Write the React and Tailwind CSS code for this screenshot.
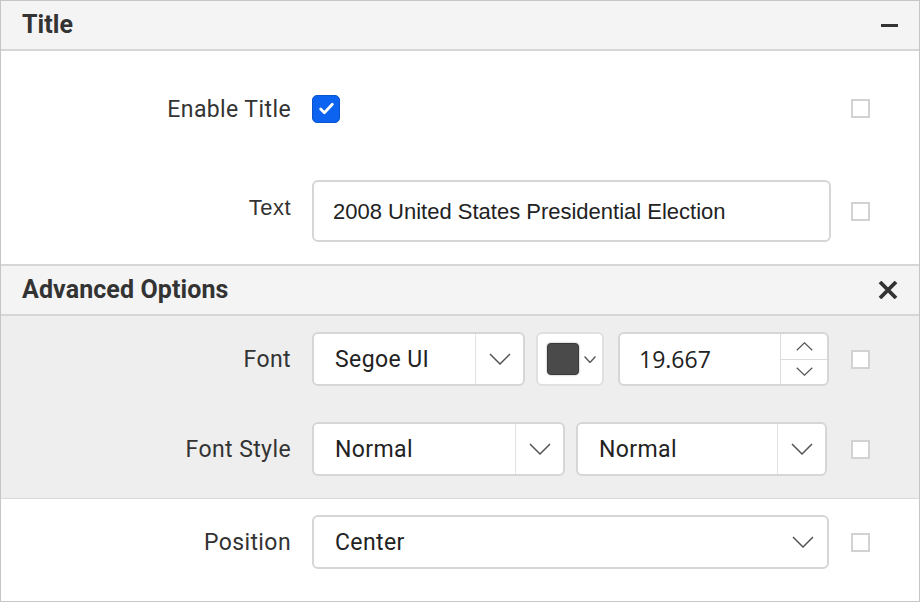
import React from 'react';

// Панел "Title" с разширени опции за шрифта.

const ROBOTO = { fontFamily: 'Roboto, "Liberation Sans", sans-serif' };
const ARIAL = { fontFamily: '"Liberation Sans", Arial, sans-serif' };

function Chevron({ className = 'w-[22px] h-[12px]', width = 1.5 }) {
  return (
    <svg viewBox="0 0 22 12" className={className} fill="none" stroke="#555" strokeWidth={width} preserveAspectRatio="none">
      <path d="M1 1l10 10L21 1" />
    </svg>
  );
}

function SmallBox() {
  return <span className="block w-[19px] h-[19px] border-2 border-[#d2d2d2] bg-white shrink-0" />;
}

function Header({ title, icon }) {
  return (
    <div className="flex items-center justify-between h-[48px] bg-[#f4f4f4] pl-[21px] pr-[22px] text-[#333]">
      <span className="text-[25px] font-bold tracking-[0.1px]" style={ROBOTO}>{title}</span>
      {icon}
    </div>
  );
}

function Row({ label, labelFont = ROBOTO, labelClass = 'text-[23px] tracking-[0.4px] pt-[3px]', children, className = '' }) {
  return (
    <div className={`flex items-center ${className}`}>
      <div className={`w-[290px] text-right text-[#333] ${labelClass}`} style={labelFont}>{label}</div>
      <div className="w-[521px] ml-[21px] flex items-center">{children}</div>
      <div className="ml-[18px]"><SmallBox /></div>
    </div>
  );
}

function Select({ value, width }) {
  return (
    <div className={`flex h-[54px] bg-white border-2 border-[#d6d6d6] rounded-[6px] ${width}`}>
      <div className="flex-1 flex items-center pl-[21px] pt-[3px] text-[23px] tracking-[0.4px] text-[#222]" style={ROBOTO}>{value}</div>
      <div className="w-[48px] border-l border-[#e2e2e2] flex items-center justify-center">
        <Chevron />
      </div>
    </div>
  );
}

export default function App() {
  return (
    <div className="w-[920px] h-[602px] bg-white border border-[#c6c6c6] flex flex-col overflow-hidden">
      <div className="border-b-2 border-[#d6d6d6]">
        <Header
          title="Title"
          icon={<span className="block w-[17px] h-[3px] bg-[#333] mr-[-1px]" />}
        />
      </div>

      <div className="flex flex-col h-[213px]">
        <Row label="Enable Title" className="h-[115px]">
          <span className="w-[28px] h-[28px] rounded-[5px] bg-[#0b63ef] border border-[#0a55cc] flex items-center justify-center">
            <svg viewBox="0 0 16 16" className="w-[17px] h-[17px]" fill="none" stroke="white" strokeWidth="2.6" strokeLinecap="round" strokeLinejoin="round">
              <path d="M2.5 8.5l3.5 3.5 7.5-8" />
            </svg>
          </span>
        </Row>
        <Row label="Text" labelFont={ARIAL} labelClass="text-[22px] tracking-[0.5px] pb-[8px]" className="h-[90px]">
          <div className="w-[519px] h-[62px] border-2 border-[#d6d6d6] rounded-[6px] flex items-center pl-[19px] text-[22px] text-[#222]" style={ARIAL}>
            2008 United States Presidential Election
          </div>
        </Row>
      </div>

      <div className="border-y-2 border-[#d6d6d6]">
        <Header
          title="Advanced Options"
          icon={
            <svg viewBox="0 0 20 18" className="w-[20px] h-[18px] mr-[-1px]" stroke="#333" strokeWidth="3.8" strokeLinecap="butt">
              <path d="M2 1l16 16M18 1L2 17" />
            </svg>
          }
        />
      </div>

      <div className="bg-[#eeeeee] border-b border-[#dadada] pt-[16px] pb-[22px] flex flex-col gap-[36px]">
        <Row label="Font" className="h-[54px]">
          <Select value="Segoe UI" width="w-[213px]" />
          <div className="ml-[11px] w-[68px] h-[54px] bg-white border-2 border-[#e0e0e0] rounded-[6px] flex items-center pl-[9px] gap-[5px]">
            <span className="w-[32px] h-[32px] rounded-[4px] bg-[#4a4a4a] border border-[#3a3a3a] shadow-[0_0_2px_rgba(0,0,0,0.4)]" />
            <Chevron className="w-[12px] h-[7px]" width={2.6} />
          </div>
          <div className="ml-[14px] w-[211px] h-[54px] bg-white border-2 border-[#d6d6d6] rounded-[6px] flex">
            <div className="flex-1 flex items-center pl-[19px] text-[23px] text-[#222]" style={{ fontFamily: '"Open Sans", Roboto, sans-serif' }}>19.667</div>
            <div className="w-[47px] border-l border-[#dcdcdc] flex flex-col">
              <div className="flex-1 flex items-center justify-center border-b border-[#dcdcdc]">
                <Chevron className="w-[17px] h-[9px] rotate-180" />
              </div>
              <div className="flex-1 flex items-center justify-center">
                <Chevron className="w-[17px] h-[9px]" />
              </div>
            </div>
          </div>
        </Row>
        <Row label="Font Style" className="h-[54px]">
          <Select value="Normal" width="w-[253px]" />
          <div className="ml-[11px]">
            <Select value="Normal" width="w-[251px]" />
          </div>
        </Row>
      </div>

      <div className="pt-[16px]">
        <Row label="Position" className="h-[54px]">
          <div className="w-[517px] h-[54px] bg-white border-2 border-[#d6d6d6] rounded-[6px] flex">
            <div className="flex-1 flex items-center pl-[21px] pt-[3px] text-[23px] tracking-[0.4px] text-[#222]" style={ROBOTO}>Center</div>
            <div className="w-[48px] flex items-center justify-center">
              <Chevron />
            </div>
          </div>
        </Row>
      </div>
    </div>
  );
}
